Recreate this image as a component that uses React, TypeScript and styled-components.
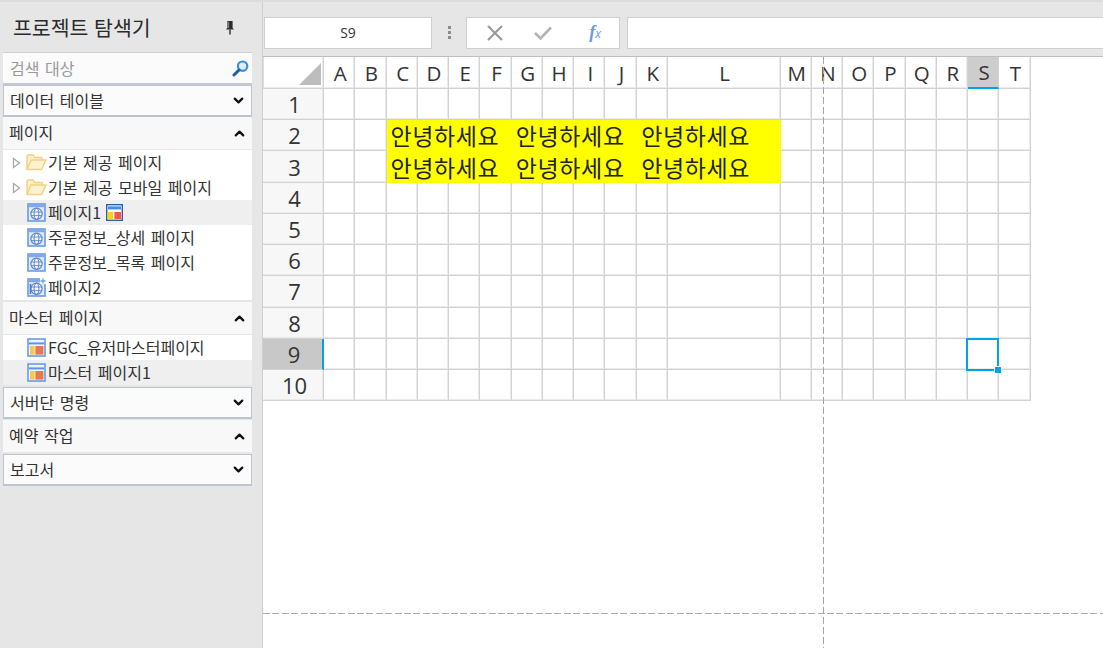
import { Fragment, ReactNode } from "react";
import styled, { createGlobalStyle } from "styled-components";
import { ChevronDown, ChevronUp } from "lucide-react";

const KR = `"Noto Sans CJK KR", "Noto Sans", sans-serif`;
const LATIN = `"Open Sans", "Noto Sans CJK KR", sans-serif`;

const COLUMNS = "ABCDEFGHIJKLMNOPQRST".split("");
const ROWS = [1, 2, 3, 4, 5, 6, 7, 8, 9, 10];
const GREETINGS = ["안녕하세요", "안녕하세요", "안녕하세요"];

const Triangle = () => (
  <svg width="9" height="12" viewBox="0 0 9 12">
    <path d="M1.5 1.5 L7.5 6 L1.5 10.5 Z" fill="#fff" stroke="#a8a8a8" strokeWidth="1.3" />
  </svg>
);

const FolderIcon = () => (
  <svg width="21" height="17" viewBox="0 0 21 17">
    <path d="M1 15.5 V2.5 Q1 1 2.5 1 H7 L9 3.5 H16 V6" fill="#fdf1c9" stroke="#f3d27e" strokeWidth="1.4" />
    <path d="M1 15.5 L5 6 H20 L15.5 15.5 Z" fill="#fdf3d2" stroke="#f3d27e" strokeWidth="1.4" />
  </svg>
);

const PageIcon = ({ plus }: { plus?: boolean }) => (
  <svg width="19" height="19" viewBox="0 0 19 19">
    <rect x="1" y="1" width="17" height="17" fill="#dfeafb" stroke="#6a9ae6" strokeWidth="1.6" />
    <rect x="1" y="1" width="17" height="3.2" fill="#7fa9ec" />
    <circle cx="9.5" cy="10.8" r="5.6" fill="#f4f8fe" stroke="#5f86c8" strokeWidth="1.2" />
    <ellipse cx="9.5" cy="10.8" rx="2.4" ry="5.6" fill="none" stroke="#5f86c8" strokeWidth="1" />
    <path d="M4 9 H15 M4 12.6 H15" stroke="#5f86c8" strokeWidth="0.9" />
    {plus && (
      <>
        <path d="M13 0 H19 V6 H13 Z" fill="#fff" />
        <path d="M16 0.5 V5.5 M13.5 3 H18.5" stroke="#5fa0ea" strokeWidth="1.3" />
        <path d="M3.5 6 V16" stroke="#3f7fd8" strokeWidth="1.6" />
      </>
    )}
  </svg>
);

const MasterIcon = () => (
  <svg width="19" height="19" viewBox="0 0 19 19">
    <rect x="1" y="1" width="17" height="17" fill="#eef4fd" stroke="#6a9ae6" strokeWidth="1.6" />
    <rect x="2" y="4.4" width="15" height="2" fill="#5f93e4" />
    <rect x="3" y="8" width="4.6" height="8.6" fill="#f3c94f" />
    <rect x="8.4" y="8" width="8" height="8.6" fill="#e8764e" />
  </svg>
);

const BadgeIcon = () => (
  <svg width="17" height="17" viewBox="0 0 17 17">
    <rect x="0.7" y="0.7" width="15.6" height="15.6" fill="#fff" stroke="#2f5ea8" strokeWidth="1.4" />
    <rect x="2" y="2.4" width="13" height="3" fill="#3f8cf0" />
    <rect x="2" y="8" width="5" height="7" fill="#ffd400" />
    <rect x="8.4" y="8" width="6.6" height="7" fill="#f0584c" />
  </svg>
);

const PinIcon = () => (
  <svg width="10" height="15" viewBox="0 0 10 15">
    <path d="M2.4 1 H7.6 V8 L9 9.5 H1 L2.4 8 Z" fill="#2c2c2c" />
    <path d="M3.6 2 V8" stroke="#8a8a8a" strokeWidth="1" />
    <path d="M5 9.5 V14.5" stroke="#2c2c2c" strokeWidth="1.4" />
  </svg>
);

const SearchIcon = () => (
  <svg width="17" height="17" viewBox="0 0 17 17">
    <circle cx="10.6" cy="6.2" r="4.7" fill="#dfeefb" stroke="#3a8fd6" strokeWidth="2.2" />
    <path d="M7 10 L2 15" stroke="#1c5fa8" strokeWidth="3" strokeLinecap="round" />
  </svg>
);

type SectionProps = { title: string; open?: boolean; top?: number; bottom?: number };

const Section = ({ title, open, top = 0, bottom = 0 }: SectionProps) => (
  <SectionHeader $open={open} $top={top} $bottom={bottom}>
    <SectionTitle>{title}</SectionTitle>
    {open ? <ChevronUp size={15} strokeWidth={3.6} color="#111" /> : <ChevronDown size={15} strokeWidth={3.6} color="#111" />}
  </SectionHeader>
);

const Item = ({ icon, label, active, folder, extra }: { icon: ReactNode; label: string; active?: boolean; folder?: boolean; extra?: ReactNode }) => (
  <TreeRow $active={active}>
    <Toggle>{folder && <Triangle />}</Toggle>
    <IconSlot>{icon}</IconSlot>
    <ItemLabel>{label}</ItemLabel>
    {extra}
  </TreeRow>
);

export default function App() {
  return (
    <>
      <GlobalStyle />
      <Page>
        <Sidebar>
          <TitleRow>
            <Title>프로젝트 탐색기</Title>
            <PinIcon />
          </TitleRow>
          <SearchBox>
            <span>검색 대상</span>
            <SearchIcon />
          </SearchBox>
          <Section title="데이터 테이블" />
          <Section title="페이지" open bottom={1} />
          <Tree>
            <Item folder icon={<FolderIcon />} label="기본 제공 페이지" />
            <Item folder icon={<FolderIcon />} label="기본 제공 모바일 페이지" />
            <Item active icon={<PageIcon />} label="페이지1" extra={<BadgeIcon />} />
            <Item icon={<PageIcon />} label="주문정보_상세 페이지" />
            <Item icon={<PageIcon />} label="주문정보_목록 페이지" />
            <Item icon={<PageIcon plus />} label="페이지2" />
          </Tree>
          <Section title="마스터 페이지" open top={2} bottom={1} />
          <Tree>
            <Item icon={<MasterIcon />} label="FGC_유저마스터페이지" />
            <Item active icon={<MasterIcon />} label="마스터 페이지1" />
          </Tree>
          <Section title="서버단 명령" top={2} />
          <Section title="예약 작업" open top={1} />
          <Section title="보고서" top={2} />
        </Sidebar>
        <Main>
          <Toolbar>
            <NameBox>S9</NameBox>
            <Dots>
              <i />
              <i />
              <i />
            </Dots>
            <FormulaButtons>
              <svg width="18" height="18" viewBox="0 0 18 18">
                <path d="M2 2 L16 16 M16 2 L2 16" stroke="#9a9a9a" strokeWidth="2.2" />
              </svg>
              <svg width="20" height="16" viewBox="0 0 20 16">
                <path d="M2 8 L7.5 13.5 L18 2.5" fill="none" stroke="#b4b4b4" strokeWidth="2.6" />
              </svg>
              <Fx>
                f<small>x</small>
              </Fx>
            </FormulaButtons>
            <FormulaInput />
          </Toolbar>
          <Sheet>
            <Grid>
              <Corner>
                <svg width="22" height="22" viewBox="0 0 22 22">
                  <path d="M22 0 V22 H0 Z" fill="#bdbdbd" />
                </svg>
              </Corner>
              {COLUMNS.map((c) => (
                <ColHeader key={c} $selected={c === "S"}>
                  {c}
                </ColHeader>
              ))}
              {ROWS.map((r) => (
                <Fragment key={r}>
                  <RowHeader $selected={r === 9}>{r}</RowHeader>
                  {COLUMNS.map((c) => {
                    if ((r === 2 || r === 3) && c >= "C" && c <= "L") return null;
                    return <Cell key={c} />;
                  })}
                  {r === 2 && (
                    <Highlight>
                      {[0, 1].map((line) => (
                        <HighlightLine key={line}>
                          {GREETINGS.map((g, i) => (
                            <span key={i}>{g}</span>
                          ))}
                        </HighlightLine>
                      ))}
                    </Highlight>
                  )}
                </Fragment>
              ))}
              <Selection />
            </Grid>
            <VGuide />
            <HGuide />
          </Sheet>
        </Main>
      </Page>
    </>
  );
}

const GlobalStyle = createGlobalStyle`
  html, body {
    margin: 0;
    padding: 0;
    height: 100%;
    overflow: hidden;
    background: #e6e6e6;
  }
  #root {
    height: 100%;
  }
`;

const Page = styled.div`
  width: 1103px;
  height: 648px;
  display: flex;
  box-sizing: border-box;
  border-top: 2px solid #dcdcdc;
  background: #e6e6e6;
  font-family: ${KR};
  color: #333;
  overflow: hidden;
`;

const Sidebar = styled.div`
  width: 263px;
  flex: none;
  box-sizing: border-box;
  padding: 0 10px 0 3px;
  display: flex;
  flex-direction: column;
  border-right: 1px solid #cfcfcf;
`;

const TitleRow = styled.div`
  height: 50px;
  flex: none;
  display: flex;
  align-items: center;
  justify-content: space-between;
  padding: 0 17px 0 10px;
`;

const Title = styled.div`
  font-size: 20.5px;
  word-spacing: 1px;
  line-height: 1;
  color: #2a2a2a;
`;

const SearchBox = styled.div`
  height: 33px;
  flex: none;
  box-sizing: border-box;
  display: flex;
  align-items: center;
  justify-content: space-between;
  padding: 0 3px 0 7px;
  background: #fbfbfb;
  border-top: 1px solid #d0d0d0;
  border-bottom: 2px solid #c4c8d0;
  font-size: 16px;
  word-spacing: 2px;
  color: #999;
`;

const SectionHeader = styled.div<{ $open?: boolean; $top: number; $bottom: number }>`
  height: 32px;
  flex: none;
  box-sizing: border-box;
  display: flex;
  align-items: center;
  justify-content: space-between;
  padding: 0 5px 0 6px;
  font-size: 16px;
  word-spacing: 2px;
  color: #333;
  background: ${(p) => (p.$open ? "#f8f8f8" : "#fbfbfb")};
  border: ${(p) => (p.$open ? "none" : "1px solid #bcc4d2")};
  border-bottom-width: ${(p) => (p.$open ? "0" : "2px")};
  margin: ${(p) => p.$top}px 0 ${(p) => p.$bottom}px;
`;

const SectionTitle = styled.span`
  margin-top: -2px;
`;

const Tree = styled.div`
  flex: none;
  background: #fff;
  display: flex;
  flex-direction: column;
`;

const TreeRow = styled.div<{ $active?: boolean }>`
  height: 25px;
  display: flex;
  align-items: center;
  font-size: 16px;
  word-spacing: 2px;
  color: #333;
  background: ${(p) => (p.$active ? "#efefef" : "#fff")};
  > svg {
    margin-left: 5px;
  }
`;

const ItemLabel = styled.span`
  margin-top: -2px;
`;

const Toggle = styled.div`
  width: 22px;
  flex: none;
  box-sizing: border-box;
  padding-left: 5px;
  display: flex;
  justify-content: center;
`;

const IconSlot = styled.div`
  width: 23px;
  flex: none;
  display: flex;
  justify-content: center;
`;

const Main = styled.div`
  flex: 1;
  min-width: 0;
  display: flex;
  flex-direction: column;
`;

const Toolbar = styled.div`
  height: 55px;
  flex: none;
  box-sizing: border-box;
  display: flex;
  align-items: center;
  padding: 0 0 8px 1px;
  border-bottom: 1px solid #bdbdbd;
`;

const NameBox = styled.div`
  width: 168px;
  height: 32px;
  flex: none;
  box-sizing: border-box;
  margin-top: 15px;
  display: flex;
  align-items: center;
  justify-content: center;
  background: #fff;
  border: 1px solid #cfcfcf;
  font-family: ${LATIN};
  font-size: 14px;
  color: #333;
`;

const Dots = styled.div`
  width: 34px;
  flex: none;
  margin-top: 15px;
  display: flex;
  flex-direction: column;
  align-items: center;
  gap: 2px;
  i {
    width: 3px;
    height: 3px;
    background: #8c8c8c;
  }
`;

const FormulaButtons = styled.div`
  width: 154px;
  height: 32px;
  flex: none;
  box-sizing: border-box;
  margin-top: 15px;
  padding: 0 18px 0 19px;
  display: flex;
  align-items: center;
  justify-content: space-between;
  background: #fff;
  border: 1px solid #cfcfcf;
  svg:nth-child(2) {
    margin-left: -8px;
  }
`;

const Fx = styled.span`
  font-family: "Liberation Serif", serif;
  font-style: italic;
  font-weight: 700;
  font-size: 18px;
  color: #6c9be6;
  small {
    font-family: ${LATIN};
    font-size: 12px;
    font-style: italic;
    font-weight: 400;
  }
`;

const FormulaInput = styled.div`
  flex: 1;
  height: 32px;
  box-sizing: border-box;
  margin: 15px 0 0 7px;
  background: #fff;
  border: 1px solid #cfcfcf;
  border-right: none;
`;

const Sheet = styled.div`
  flex: 1;
  position: relative;
  background: #fff;
  overflow: hidden;
`;

const Grid = styled.div`
  position: relative;
  width: max-content;
  display: grid;
  grid-template-columns: 61px repeat(11, 31.27px) 112.6px repeat(8, 31.25px);
  grid-template-rows: 32px repeat(10, 31.22px);
`;

const GridLine = `
  box-sizing: border-box;
  border-right: 1px solid #d2d2d2;
  border-bottom: 1px solid #d2d2d2;
  box-shadow: inset -1px -1px 0 #ebebeb;
`;

const Corner = styled.div`
  ${GridLine}
  display: flex;
  align-items: flex-end;
  justify-content: flex-end;
  padding: 0 2px 3px 0;
  border-left: 1px solid #dedede;
  background: #fff;
`;

const ColHeader = styled.div<{ $selected?: boolean }>`
  ${GridLine}
  display: flex;
  align-items: center;
  justify-content: center;
  padding-left: 2px;
  font-family: ${LATIN};
  font-size: 20.5px;
  color: #333;
  background: ${(p) => (p.$selected ? "#cdcdcd" : "#fff")};
  ${(p) => p.$selected && "border-bottom: 2px solid #00a2e8; box-shadow: none;"}
`;

const RowHeader = styled.div<{ $selected?: boolean }>`
  ${GridLine}
  display: flex;
  align-items: center;
  justify-content: center;
  padding-left: 3px;
  font-family: ${LATIN};
  font-size: 22px;
  color: #333;
  background: ${(p) => (p.$selected ? "#c8c8c8" : "#f7f7f7")};
  ${(p) => p.$selected && "border-right: 2px solid #00a2e8; box-shadow: none;"}
`;

const Cell = styled.div`
  ${GridLine}
  background: #fff;
`;

const Highlight = styled.div`
  grid-column: 4 / span 10;
  grid-row: 3 / span 2;
  display: grid;
  grid-template-rows: 1fr 1fr;
  background: #ffff00;
`;

const HighlightLine = styled.div`
  display: flex;
  align-items: center;
  gap: 16.5px;
  padding-left: 4px;
  font-size: 23px;
  letter-spacing: 0.6px;
  line-height: 1;
  color: #222;
`;

const Selection = styled.div`
  position: absolute;
  left: 703px;
  top: 281px;
  width: 33px;
  height: 33px;
  box-sizing: border-box;
  border: 2px solid #00a2e8;
  &::after {
    content: "";
    position: absolute;
    right: -5px;
    bottom: -5px;
    width: 8px;
    height: 8px;
    background: #00a2e8;
    border: 1px solid #fff;
    box-sizing: border-box;
  }
`;

const VGuide = styled.div`
  position: absolute;
  left: 560px;
  top: 0;
  bottom: 0;
  width: 1px;
  background: repeating-linear-gradient(to bottom, #a4a4a4 0 7px, transparent 7px 10px);
`;

const HGuide = styled.div`
  position: absolute;
  left: 0;
  right: 0;
  top: 556px;
  height: 1px;
  background: repeating-linear-gradient(to right, #acacac 0 7px, transparent 7px 9.4px);
`;
